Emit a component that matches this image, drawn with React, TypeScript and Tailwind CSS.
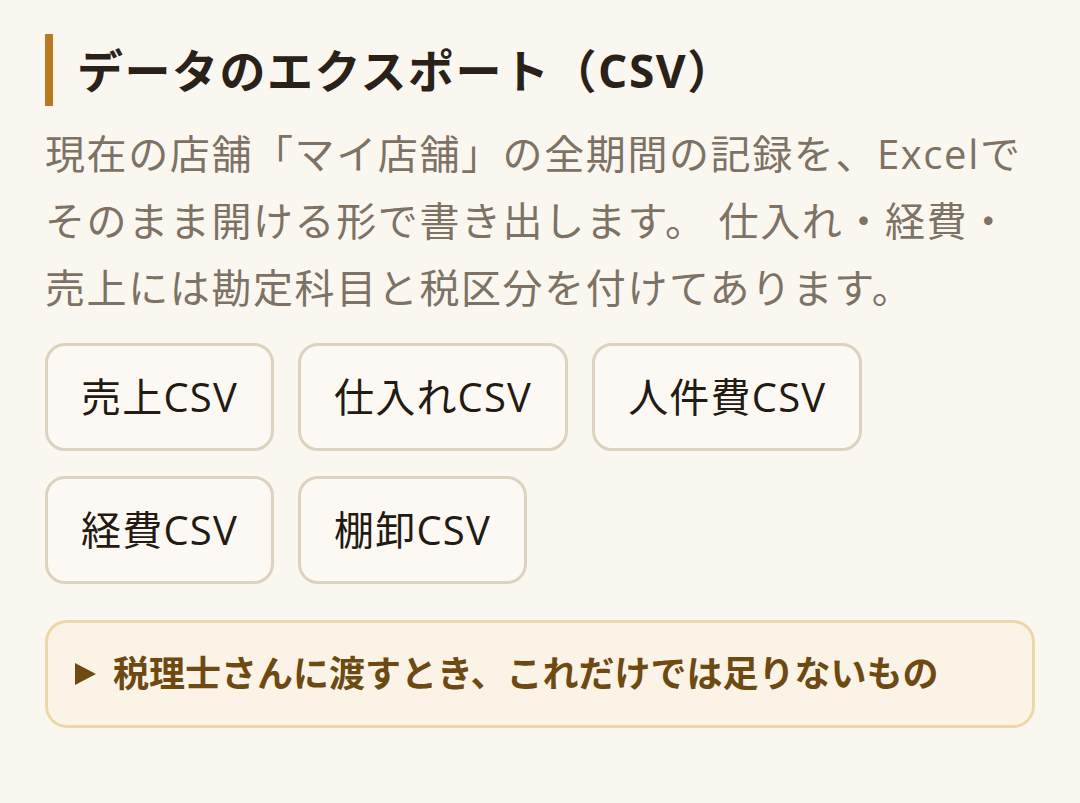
const buttons = [
  ["売上CSV", "仕入れCSV", "人件費CSV"],
  ["経費CSV", "棚卸CSV"],
];

const App = () => {
  return (
    <div
      className="min-h-screen bg-[#faf7f1] px-[45px] pt-[34px]"
      style={{ fontFamily: '"Open Sans", "Noto Sans CJK JP", sans-serif' }}
    >
      {/* Title */}
      <h1 className="border-l-[8px] border-[#b8791f] pl-[24px] text-[46px] leading-[72px] tracking-[1.5px] font-bold text-[#2a2118]">
        データのエクスポート（CSV）
      </h1>

      <p className="mt-[14px] text-[40px] leading-[67px] tracking-[0.04em] text-[#7d7264]">
        現在の店舗「マイ店舗」の全期間の記録を、Excelでそのまま開ける形で書き出します。 仕入れ・経費・売上には勘定科目と税区分を付けてあります。
      </p>

      {/* Export buttons */}
      <div className="mt-[22px] flex flex-col gap-[25px]">
        {buttons.map((row, i) => (
          <div key={i} className="flex gap-[24px]">
            {row.map((label) => (
              <button
                key={label}
                className="flex h-[108px] items-center rounded-[20px] border-[3px] border-[#ddd2bf] bg-[#fcf9f4] px-[33px] text-[40px] tracking-[1.2px] text-[#231a12]"
              >
                {label}
              </button>
            ))}
          </div>
        ))}
      </div>

      {/* Accountant note */}
      <div className="mt-[36px] flex h-[108px] items-center gap-[17px] rounded-[22px] border-[3px] border-[#ecd8a6] bg-[#fbf4e6] px-[27px]">
        <svg width="21" height="24" viewBox="0 0 21 24">
          <path d="M0 1 L21 12 L0 23 Z" fill="#6e4a12" />
        </svg>
        <span className="text-[36px] font-bold text-[#6e4a12]">
          税理士さんに渡すとき、これだけでは足りないもの
        </span>
      </div>
    </div>
  );
};

export default App;
